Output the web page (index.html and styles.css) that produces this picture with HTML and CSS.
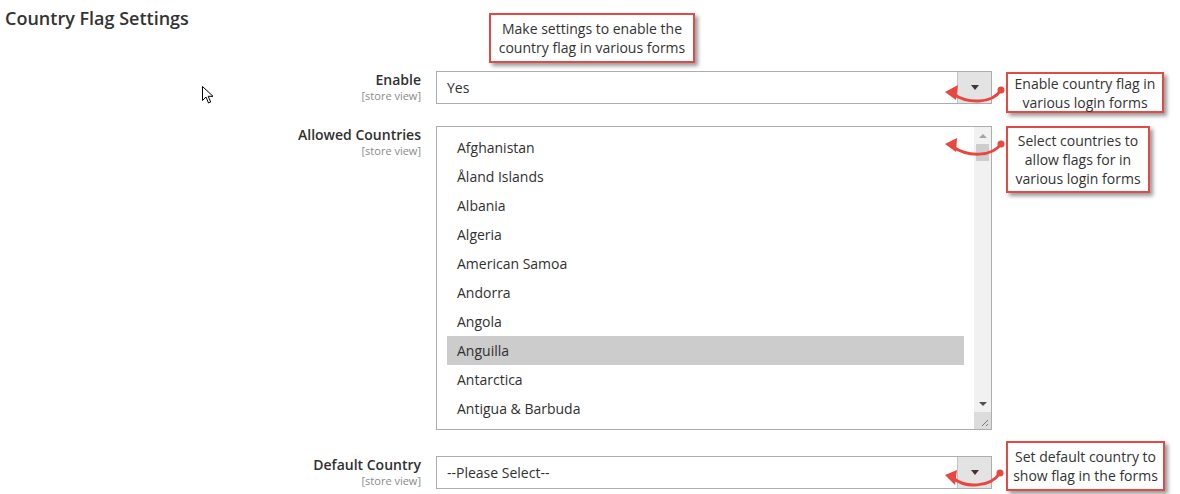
FILE: index.html
```html
<!DOCTYPE html>
<html lang="en">
<head>
	<meta charset="UTF-8">
	<title>Country Flag Settings</title>
	<link rel="stylesheet" href="styles.css">
</head>
<body>
<main class="page">
	<h2 class="section-title">Country Flag Settings</h2>

	<div class="form">
		<div class="field field-enable">
			<div class="label">
				<span class="label-text">Enable</span>
				<span class="scope">[store view]</span>
			</div>
			<div class="control">
				<div class="select">
					<span class="select-value">Yes</span>
					<span class="select-btn"><i class="tri-down"></i></span>
				</div>
			</div>
		</div>

		<div class="field field-countries">
			<div class="label">
				<span class="label-text">Allowed Countries</span>
				<span class="scope">[store view]</span>
			</div>
			<div class="control">
				<div class="multiselect">
					<ul class="options">
						<li>Afghanistan</li>
						<li>Åland Islands</li>
						<li>Albania</li>
						<li>Algeria</li>
						<li>American Samoa</li>
						<li>Andorra</li>
						<li>Angola</li>
						<li class="selected">Anguilla</li>
						<li>Antarctica</li>
						<li>Antigua &amp; Barbuda</li>
					</ul>
					<div class="scrollbar">
						<div class="sb-btn"><i class="tri-up"></i></div>
						<div class="sb-thumb"></div>
						<div class="sb-track"></div>
						<div class="sb-btn"><i class="tri-down small"></i></div>
						<div class="resizer">
							<svg width="17" height="17" viewBox="0 0 17 17">
								<path d="M14 8 L8 14 M14 12 L12 14" stroke="#777" stroke-width="1" fill="none"/>
							</svg>
						</div>
					</div>
				</div>
			</div>
		</div>

		<div class="field field-default">
			<div class="label">
				<span class="label-text">Default Country</span>
				<span class="scope">[store view]</span>
			</div>
			<div class="control">
				<div class="select">
					<span class="select-value">--Please Select--</span>
					<span class="select-btn"><i class="tri-down"></i></span>
				</div>
			</div>
		</div>
	</div>

	<!-- annotations laid over the screenshot -->
	<div class="callout callout-top">Make settings to enable the<br>country flag in various forms</div>
	<div class="callout callout-enable">Enable country flag in<br>various login forms</div>
	<div class="callout callout-countries">Select countries to<br>allow flags for in<br>various login forms</div>
	<div class="callout callout-default">Set default country to<br>show flag in the forms</div>

	<svg class="arrows" width="1180" height="494" viewBox="0 0 1180 494">
		<g fill="none" stroke="#e8463e" stroke-width="3" stroke-linecap="round">
			<path d="M1001 90 C 992 104 968 104 953 94"/>
			<path d="M1001 144 C 992 157 968 157 953 147"/>
			<path d="M1000 473 C 990 488 965 488 953 478"/>
		</g>
		<g fill="#e8463e">
			<circle cx="1001" cy="90" r="3.5"/>
			<circle cx="1001" cy="144" r="3.5"/>
			<circle cx="1000" cy="473" r="3.5"/>
			<polygon points="945,92 958,85 956,100"/>
			<polygon points="945,144 957,138 956,152"/>
			<polygon points="945,475 957,470 955,485"/>
		</g>
	</svg>

	<svg class="cursor" width="13" height="19" viewBox="0 0 13 19">
		<path d="M0.5 0.5 L0.5 14.5 L4 11 L6.5 17 L8.7 16 L6.2 10.3 L11 10.3 Z" fill="#fff" stroke="#000" stroke-width="1" stroke-linejoin="round"/>
	</svg>
</main>
</body>
</html>
```

FILE: styles.css
```css
body{
	margin: 0;
	background: #fff;
	font-family: "Open Sans", "Noto Sans", sans-serif;
	color: #303030;
}

.page{
	position: relative;
	width: 1180px;
	height: 494px;
	overflow: hidden;
}

.section-title{
	margin: 0;
	padding: 7px 5px 0;
	font-size: 18px;
	font-weight: 600;
	line-height: 22px;
	color: #333;
}

.form{
	margin-top: 42px;
}

/* one settings row: label column, then the control */
.field{
	display: flex;
	align-items: flex-start;
}

.field-enable{
	margin-bottom: 22px;
}

.field-countries{
	margin-bottom: 26px;
}

.label{
	width: 421px;
	text-align: right;
	display: flex;
	flex-direction: column;
}

.label-text{
	font-size: 14px;
	font-weight: 600;
	line-height: 18px;
	color: #303030;
}

.scope{
	font-size: 11px;
	line-height: 14px;
	color: #8a8a8a;
}

.control{
	margin-left: 15px;
	width: 556px;
}

.select{
	height: 33px;
	box-sizing: border-box;
	border: 1px solid #adadad;
	display: flex;
	align-items: stretch;
	font-size: 14px;
}

.select-value{
	flex: 1;
	padding-left: 10px;
	display: flex;
	align-items: center;
}

.select-btn{
	width: 33px;
	background: #e3e3e3;
	border-left: 1px solid #c4c4c4;
	display: flex;
	align-items: center;
	justify-content: center;
}

.tri-down{
	width: 0;
	height: 0;
	border-left: 4px solid transparent;
	border-right: 4px solid transparent;
	border-top: 5px solid #41362f;
}

.tri-down.small{
	border-top: 4px solid #505050;
}

.tri-up{
	width: 0;
	height: 0;
	border-left: 4px solid transparent;
	border-right: 4px solid transparent;
	border-bottom: 4px solid #a3a3a3;
}

.multiselect{
	height: 304px;
	box-sizing: border-box;
	border: 1px solid #adadad;
	display: flex;
}

.options{
	flex: 1;
	margin: 0;
	padding: 6px 10px 0;
	list-style: none;
	overflow: hidden;
	font-size: 14px;
}

.options li{
	height: 29px;
	line-height: 29px;
	padding-left: 10px;
}

.options li.selected{
	background: #cccccc;
}

.scrollbar{
	width: 17px;
	background: #f1f1f1;
	display: flex;
	flex-direction: column;
}

.sb-btn{
	height: 17px;
	display: flex;
	align-items: center;
	justify-content: center;
}

.sb-thumb{
	height: 17px;
	margin: 0 2px;
	background: #cdcdcd;
}

.sb-track{
	flex: 1;
}

.resizer{
	height: 17px;
	background: #dcdcdc;
}

.resizer svg{
	display: block;
}

.callout{
	position: absolute;
	box-sizing: border-box;
	border: 2px solid #e14b45;
	background: #fff;
	box-shadow: 3px 3px 4px rgba(0, 0, 0, 0.4);
	display: flex;
	align-items: center;
	justify-content: center;
	text-align: center;
	font-size: 14px;
	line-height: 19px;
	color: #333;
}

.callout-top{
	left: 489px;
	top: 13px;
	width: 206px;
	height: 50px;
}

.callout-enable{
	left: 1006px;
	top: 72px;
	width: 158px;
	height: 41px;
}

.callout-countries{
	left: 1006px;
	top: 126px;
	width: 144px;
	height: 67px;
}

.callout-default{
	left: 1006px;
	top: 441px;
	width: 159px;
	height: 50px;
}

.arrows{
	position: absolute;
	left: 0;
	top: 0;
	pointer-events: none;
}

.cursor{
	position: absolute;
	left: 202px;
	top: 86px;
}
```
